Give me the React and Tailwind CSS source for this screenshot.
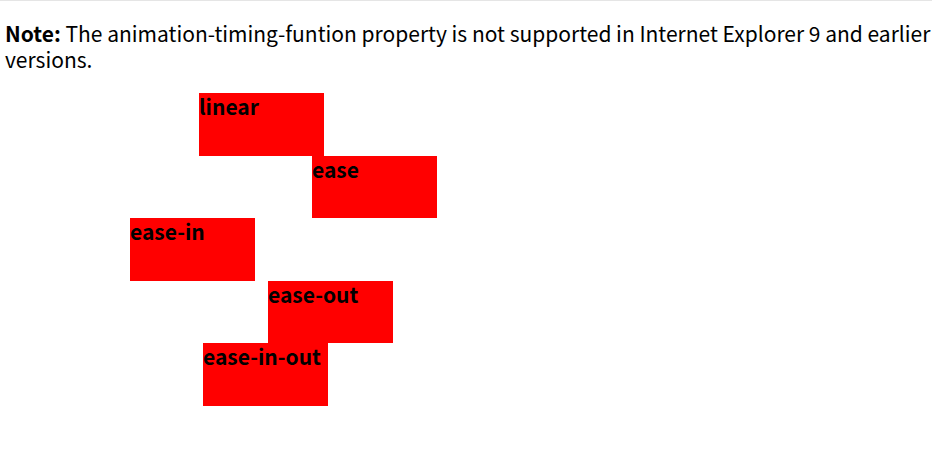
const boxes = [
  { label: 'linear', left: 'ml-[199px]', height: 'h-[63px]' },
  { label: 'ease', left: 'ml-[312px]', height: 'h-[62px]' },
  { label: 'ease-in', left: 'ml-[130px]', height: 'h-[63px]' },
  { label: 'ease-out', left: 'ml-[268px]', height: 'h-[62px]' },
  { label: 'ease-in-out', left: 'ml-[203px]', height: 'h-[63px]' },
];

export default function App() {
  return (
    <main className="border-t border-[#e5e5e5] bg-white pt-[19px] font-['Noto_Sans_CJK_SC',sans-serif] text-[21px] leading-[26px] text-black">
      <p className="pl-[5px]">
        <strong className="font-bold">Note:</strong> The animation-timing-funtion property is not
        supported in Internet Explorer 9 and earlier versions.
      </p>
      <div className="mt-[21px]">
        {boxes.map(({ label, left, height }) => (
          <div key={label} className={`w-[125px] bg-[#ff0000] font-bold ${height} ${left}`}>
            {label}
          </div>
        ))}
      </div>
    </main>
  );
}
